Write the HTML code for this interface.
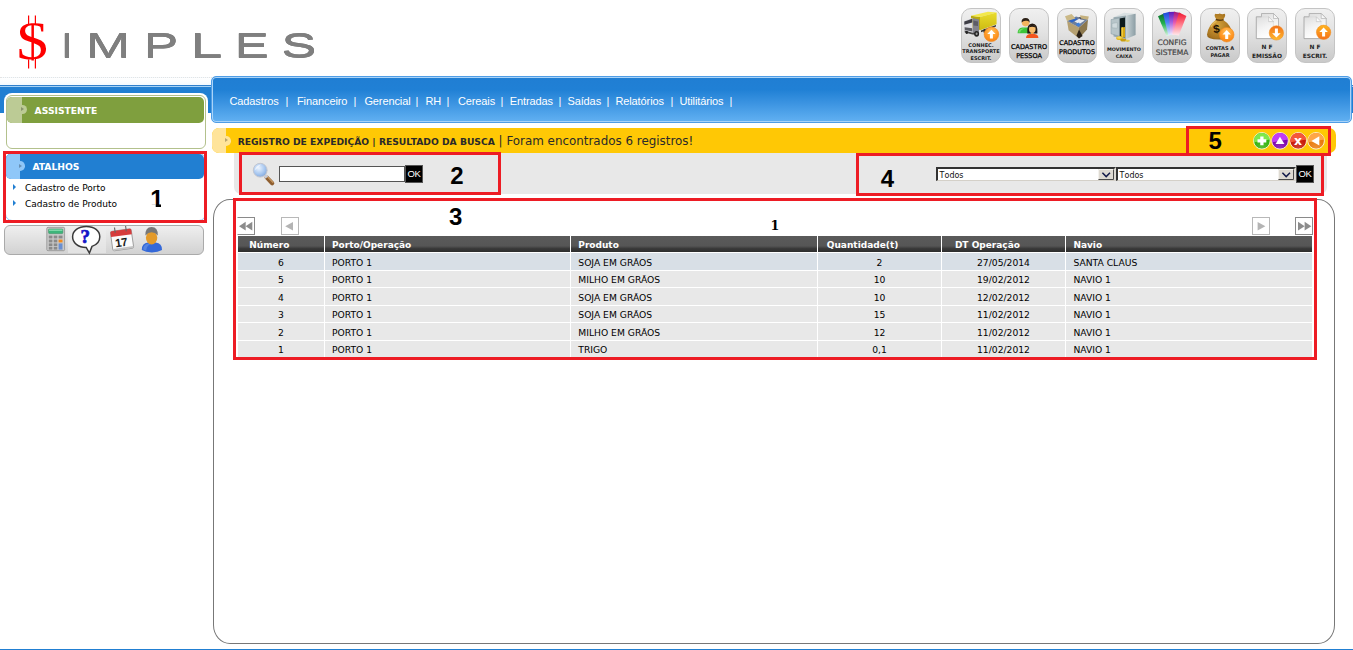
<!DOCTYPE html>
<html lang="pt-BR">
<head>
<meta charset="utf-8">
<title>Simples - Registro de Expedição</title>
<style>
html,body{margin:0;padding:0;}
body{width:1353px;height:650px;position:relative;overflow:hidden;background:#fff;
  font-family:"DejaVu Sans","Liberation Sans",sans-serif;font-size:10px;color:#000;}
.abs{position:absolute;}
/* logo */
#logo-s{left:16.7px;top:0;font-family:"Liberation Serif",serif;font-size:66px;color:#f00;line-height:1;height:66px;}
#logo-t{left:0;top:0;}

.tb{position:absolute;top:8px;width:40px;height:55px;box-sizing:border-box;border:1px solid #c4c4c4;border-radius:10px;background:linear-gradient(#f0f0f0 0%,#e2e2e2 45%,#c9c9c9 100%);overflow:hidden;}
.ti{position:absolute;left:0;top:0;width:40px;height:34px;}
.tl{position:absolute;left:-10px;width:58px;text-align:center;font-family:"DejaVu Sans",sans-serif;white-space:nowrap;letter-spacing:0}
.tl0{font-size:5.0px;font-weight:bold;line-height:6.7px;top:32.65px;color:#222;}
.tl1{font-size:6.5px;font-weight:normal;line-height:8.8px;top:34.00px;color:#000;-webkit-text-stroke:0.25px #000;}
.tl2{font-size:6.4px;font-weight:normal;line-height:8.8px;top:29.80px;color:#000;-webkit-text-stroke:0.25px #000;}
.tl3{font-size:4.85px;font-weight:bold;line-height:6.4px;top:37.30px;color:#222;}
.tl4{font-size:7.5px;font-weight:normal;line-height:10.1px;top:29.35px;color:#444;-webkit-text-stroke:0.2px #444;}
.tl5{font-size:5.05px;font-weight:bold;line-height:6.2px;top:36.40px;color:#222;}
.tl6{font-size:5.9px;font-weight:bold;line-height:8.6px;top:34.00px;color:#222;}
.tl7{font-size:5.9px;font-weight:bold;line-height:8.6px;top:34.00px;color:#222;}
/* blue bands */
#band-l{left:0;top:85px;width:1353px;height:27.5px;background:linear-gradient(#2f7fcc 0,#2f7fcc 1px,#a4d2f6 1px,#a4d2f6 2px,#217fd2 2px);}
#nav{left:211.4px;top:75.8px;width:1140.8px;height:46.8px;box-sizing:border-box;border:1px solid #4f9de6;box-shadow:inset 0 0 0 1px #a9d3f8;border-radius:5px;
  background:linear-gradient(#207ed3 0%,#2080d5 28%,#3d95e2 60%,#62b1f2 100%);}
#nav span{position:absolute;top:18.3px;left:17px;font-family:"Liberation Sans",sans-serif;font-size:11px;color:#fff;white-space:pre;letter-spacing:-0.1px}
/* assistente */
#assist{left:6px;top:95px;width:200px;height:54px;box-sizing:border-box;background:#fff;border:1px solid #b3c18c;border-radius:6px;box-shadow:0 0 0 2px #fff;}
#assist-h{left:7.4px;top:96.5px;width:196.8px;height:26px;background:#7f9f3e;border-radius:5px;overflow:hidden;}
#assist-h i{position:absolute;left:0;top:0;width:14.4px;height:100%;background:#bccb95;}
.hd-t{position:absolute;font-weight:bold;color:#fff;font-size:9.2px;font-family:"DejaVu Sans",sans-serif;}

.bl{position:absolute;width:9.6px;height:9.6px;border-radius:50%;}
.bl:after{content:"";position:absolute;left:4.2px;top:2.3px;border-left:3px solid rgba(0,0,0,.28);border-top:2.5px solid transparent;border-bottom:2.5px solid transparent;}
/* atalhos */
#atalhos-h{left:6.4px;top:153.8px;width:197.2px;height:25px;background:#217fd2;border-radius:5px;overflow:hidden;}
#atalhos-h i{position:absolute;left:0;top:0;width:13.6px;height:100%;background:#8fc7f8;}
.lnk{position:absolute;left:25px;font-size:9px;color:#000;white-space:nowrap;}
.bul{position:absolute;left:13px;width:0;height:0;border-left:3px solid #217fd2;border-top:3px solid transparent;border-bottom:3px solid transparent;}
#icons{left:4px;top:224.5px;width:200px;height:30px;box-sizing:border-box;border:1px solid #aaa;border-radius:6px;background:linear-gradient(#efefef,#d2d2d2);}
/* yellow bar */
#ybar{left:212.4px;top:128.2px;width:1123.2px;height:25.3px;background:#ffc805;border-radius:7px;overflow:hidden;}
#ybar i{position:absolute;left:0;top:0;width:13.6px;height:100%;background:#ffe49a;}
#ytxt{left:237.7px;top:134px;white-space:pre;font-size:9.2px;font-weight:bold;color:#2a2a2a;}
#ytxt b{font-weight:normal;font-size:11.9px;}
/* toolbar */
#tbar{left:234px;top:153px;width:1093px;height:41px;background:#e8e8e8;border-radius:0 0 7px 7px;}
.inp{position:absolute;background:#fff;box-sizing:border-box;border:1px solid #8a8a8a;border-top:2px solid #555;border-left:2px solid #555;}
.inp.sel{border-top:2px solid #333;border-left:2px solid #333;border-bottom:1px solid #d4d0c8;border-right:2px solid #dcd9d2;}
.ok{position:absolute;background:#000;color:#fff;font-family:"Liberation Sans",sans-serif;font-size:9.5px;letter-spacing:-0.3px;text-align:center;box-sizing:border-box;border:1px solid #555;}
/* main box */
#mbox{left:213.4px;top:199.2px;width:1121.6px;height:444.8px;box-sizing:border-box;border:1px solid #777;border-radius:17px / 19px;background:#fff;}
/* red annotation */
.red{position:absolute;box-sizing:border-box;border:3px solid #ed1c24;}
.num{position:absolute;font-family:"Liberation Sans",sans-serif;font-weight:bold;font-size:22px;color:#000;line-height:22px;}
/* table */
#th{left:238px;top:236px;width:1074px;height:16px;background:linear-gradient(#5a5a5a 0%,#565656 62%,#3a3a3a 78%,#2d2d2d 100%);}
.thc{position:absolute;top:0;height:16px;line-height:19.3px;color:#fff;font-weight:bold;font-size:9px;border-left:1px solid #fff;box-sizing:border-box;padding-left:7px;white-space:nowrap;}
.row{position:absolute;left:238px;width:1074px;height:16px;background:#e8e8e8;}
.row.sel{background:#d8dfe6;}
.c{position:absolute;top:0;padding-top:1px;height:100%;line-height:inherit;font-size:9.2px;white-space:nowrap;border-left:1px solid #fff;box-sizing:border-box;}
.pg{position:absolute;box-sizing:border-box;width:18px;height:18px;border:1px solid #999;background:#fff;}
.seltx{font-kerning:none;font-size:8px;line-height:11px;color:#111;font-family:"DejaVu Sans",sans-serif}
#bottom{left:0;top:648.5px;width:1353px;height:1.5px;background:#217fd2;}
</style>
</head>
<body>
<!-- logo -->
<svg id="logo-t" class="abs" width="340" height="75" viewBox="0 0 340 75" font-family="Liberation Sans, sans-serif" font-size="35.6" fill="#7f7f7f">
<clipPath id="cS"><rect x="0" y="23.2" width="60" height="37.2"/></clipPath>
<g clip-path="url(#cS)"><text transform="translate(16.8 59.35) scale(1.15 1)" font-family="Liberation Serif, serif" font-size="54.3" fill="#ff0000" stroke="none">$</text></g>
<path d="M28.6 15.4 V25 M35.4 15.4 V24.2 M28.6 59.6 V68.5 M35.4 58.8 V68.5" stroke="#ff0000" stroke-width="1.2" fill="none"/>
<g style="filter:drop-shadow(0 0.55px 0 #7f7f7f) drop-shadow(0 -0.55px 0 #7f7f7f)">
<text transform="translate(61.09 58.1) scale(1.195 1)">I</text>
<text transform="translate(86.04 58.1) scale(1.495 1)">M</text>
<text transform="translate(143.76 58.1) scale(1.452 1)">P</text>
<text transform="translate(190.26 58.1) scale(1.624 1)">L</text>
<text transform="translate(234.82 58.1) scale(1.430 1)">E</text>
<text transform="translate(281.60 58.1) scale(1.466 1)">S</text>
</g>
</svg>

<div class="tb" style="left:961px"><div class="ti" id="ti0"></div><div class="tl tl0">CONHEC.<br>TRANSPORTE<br>ESCRIT.</div></div>
<div class="tb" style="left:1009px"><div class="ti" id="ti1"></div><div class="tl tl1">CADASTRO<br>PESSOA</div></div>
<div class="tb" style="left:1057px"><div class="ti" id="ti2"></div><div class="tl tl2">CADASTRO<br>PRODUTOS</div></div>
<div class="tb" style="left:1104px"><div class="ti" id="ti3"></div><div class="tl tl3">MOVIMENTO<br>CAIXA</div></div>
<div class="tb" style="left:1152px"><div class="ti" id="ti4"></div><div class="tl tl4">CONFIG<br>SISTEMA</div></div>
<div class="tb" style="left:1200px"><div class="ti" id="ti5"></div><div class="tl tl5">CONTAS A<br>PAGAR</div></div>
<div class="tb" style="left:1247px"><div class="ti" id="ti6"></div><div class="tl tl6">N F<br>EMISSÃO</div></div>
<div class="tb" style="left:1295px"><div class="ti" id="ti7"></div><div class="tl tl7">N F<br>ESCRIT.</div></div>
<div class="abs" style="left:0;top:77px;width:212px;height:8px;border-top:1px dotted #e4e4e4;background:linear-gradient(#fff,#f1f8fe)"></div>
<div id="band-l" class="abs"></div>
<div id="nav" class="abs"><span style="left:17.0px">Cadastros</span><span style="left:73.0px">|</span><span style="left:84.6px">Financeiro</span><span style="left:141.0px">|</span><span style="left:152.0px">Gerencial</span><span style="left:203.0px">|</span><span style="left:213.0px">RH</span><span style="left:234.0px">|</span><span style="left:245.5px">Cereais</span><span style="left:288.0px">|</span><span style="left:297.4px">Entradas</span><span style="left:346.0px">|</span><span style="left:355.0px">Saídas</span><span style="left:394.0px">|</span><span style="left:403.0px">Relatórios</span><span style="left:458.0px">|</span><span style="left:467.0px">Utilitários</span><span style="left:517.0px">|</span></div>

<div id="assist" class="abs"></div>
<div id="assist-h" class="abs"><i></i><em class="bl" style="left:9.6px;top:8.2px;background:#bccb95"></em><span class="hd-t" style="left:27.2px;top:8px">ASSISTENTE</span></div>

<div class="abs" style="left:5px;top:153px;width:201px;height:68px;box-sizing:border-box;border:1px solid #8ec6f6;border-radius:7px"></div>
<div id="atalhos-h" class="abs"><i></i><em class="bl" style="left:8.8px;top:7.6px;background:#8fc7f8"></em><span class="hd-t" style="left:26px;top:7px">ATALHOS</span></div>
<div class="bul" style="top:184px"></div><div class="lnk" style="top:182.5px">Cadastro de Porto</div>
<div class="bul" style="top:200px"></div><div class="lnk" style="top:198.5px">Cadastro de Produto</div>
<div id="icons" class="abs"></div>

<div id="ybar" class="abs"><i></i><em class="bl" style="left:8.8px;top:8px;background:#ffe49a"></em></div>
<div id="ytxt" class="abs">REGISTRO DE EXPEDIÇÃO | RESULTADO DA BUSCA<b> | Foram encontrados 6 registros!</b></div>

<div id="tbar" class="abs"></div>
<div class="inp" style="left:279px;top:166px;width:126px;height:16px;border:1px solid #555"></div>
<div class="ok" style="left:405px;top:165px;width:18px;height:18px;line-height:16px">OK</div>
<div class="inp sel" style="left:936px;top:167px;width:180px;height:14px"></div>
<div class="inp sel" style="left:1116px;top:167px;width:180px;height:14px"></div>
<div class="ok" style="left:1296px;top:165px;width:18px;height:18px;line-height:16px">OK</div>

<div id="mbox" class="abs"></div>

<div class="pg" style="left:237px;top:217px;border-color:#8a8a8a;border-left-color:transparent"></div>
<div class="pg" style="left:281px;top:217px;border-color:#b8b8b8"></div>
<div class="pg" style="left:1252px;top:217px;border-color:#b8b8b8"></div>
<div class="pg" style="left:1295px;top:217px;border-color:#8a8a8a"></div>
<div class="abs seltx" style="left:939.6px;top:169.6px">Todos</div>
<div class="abs seltx" style="left:1119.6px;top:169.6px">Todos</div>
<div id="th" class="abs">
 <div class="thc" style="left:0px;width:86px;border-left:0;padding-left:11.3px">Número</div>
 <div class="thc" style="left:86px;width:246px;padding-left:7px">Porto/Operação</div>
 <div class="thc" style="left:332px;width:247px;padding-left:7.3px">Produto</div>
 <div class="thc" style="left:579px;width:124px;padding-left:8.8px">Quantidade(t)</div>
 <div class="thc" style="left:703px;width:124px;padding-left:12.9px">DT Operação</div>
 <div class="thc" style="left:827px;width:247px;padding-left:7.4px">Navio</div>
</div>
<div class="row sel" style="top:253px;height:17px;line-height:17px"><div class="c" style="left:0px;width:86px;border-left:0;text-align:center">6</div><div class="c" style="left:86px;width:246px;padding-left:7px">PORTO 1</div><div class="c" style="left:332px;width:247px;padding-left:7.3px">SOJA EM GRÃOS</div><div class="c" style="left:579px;width:124px;text-align:center">2</div><div class="c" style="left:703px;width:124px;text-align:center">27/05/2014</div><div class="c" style="left:827px;width:247px;padding-left:7.4px">SANTA CLAUS</div></div>
<div class="row" style="top:271px;height:16px;line-height:16px"><div class="c" style="left:0px;width:86px;border-left:0;text-align:center">5</div><div class="c" style="left:86px;width:246px;padding-left:7px">PORTO 1</div><div class="c" style="left:332px;width:247px;padding-left:7.3px">MILHO EM GRÃOS</div><div class="c" style="left:579px;width:124px;text-align:center">10</div><div class="c" style="left:703px;width:124px;text-align:center">19/02/2012</div><div class="c" style="left:827px;width:247px;padding-left:7.4px">NAVIO 1</div></div>
<div class="row" style="top:288px;height:17px;line-height:17px"><div class="c" style="left:0px;width:86px;border-left:0;text-align:center">4</div><div class="c" style="left:86px;width:246px;padding-left:7px">PORTO 1</div><div class="c" style="left:332px;width:247px;padding-left:7.3px">SOJA EM GRÃOS</div><div class="c" style="left:579px;width:124px;text-align:center">10</div><div class="c" style="left:703px;width:124px;text-align:center">12/02/2012</div><div class="c" style="left:827px;width:247px;padding-left:7.4px">NAVIO 1</div></div>
<div class="row" style="top:306px;height:16px;line-height:16px"><div class="c" style="left:0px;width:86px;border-left:0;text-align:center">3</div><div class="c" style="left:86px;width:246px;padding-left:7px">PORTO 1</div><div class="c" style="left:332px;width:247px;padding-left:7.3px">SOJA EM GRÃOS</div><div class="c" style="left:579px;width:124px;text-align:center">15</div><div class="c" style="left:703px;width:124px;text-align:center">11/02/2012</div><div class="c" style="left:827px;width:247px;padding-left:7.4px">NAVIO 1</div></div>
<div class="row" style="top:323px;height:17px;line-height:17px"><div class="c" style="left:0px;width:86px;border-left:0;text-align:center">2</div><div class="c" style="left:86px;width:246px;padding-left:7px">PORTO 1</div><div class="c" style="left:332px;width:247px;padding-left:7.3px">MILHO EM GRÃOS</div><div class="c" style="left:579px;width:124px;text-align:center">12</div><div class="c" style="left:703px;width:124px;text-align:center">11/02/2012</div><div class="c" style="left:827px;width:247px;padding-left:7.4px">NAVIO 1</div></div>
<div class="row" style="top:341px;height:16px;line-height:16px"><div class="c" style="left:0px;width:86px;border-left:0;text-align:center">1</div><div class="c" style="left:86px;width:246px;padding-left:7px">PORTO 1</div><div class="c" style="left:332px;width:247px;padding-left:7.3px">TRIGO</div><div class="c" style="left:579px;width:124px;text-align:center">0,1</div><div class="c" style="left:703px;width:124px;text-align:center">11/02/2012</div><div class="c" style="left:827px;width:247px;padding-left:7.4px">NAVIO 1</div></div>


<div class="red" style="left:3px;top:151px;width:204px;height:72px"></div>
<div class="red" style="left:239px;top:152px;width:262px;height:43px"></div>
<div class="red" style="left:233px;top:198px;width:1084px;height:162px"></div>
<div class="red" style="left:856px;top:153px;width:468px;height:43px"></div>
<div class="red" style="left:1186px;top:126px;width:145px;height:30px"></div>
<svg class="abs" style="left:0;top:0;pointer-events:none" width="1353" height="650" viewBox="0 0 1353 650">
<defs>
<radialGradient id="gOr" cx="0.5" cy="0.3" r="0.8"><stop offset="0" stop-color="#ffc15a"/><stop offset="0.6" stop-color="#ff9421"/><stop offset="1" stop-color="#f07a10"/></radialGradient>
<linearGradient id="gDoc" x1="0" y1="0" x2="0.3" y2="1"><stop offset="0" stop-color="#dedede"/><stop offset="0.6" stop-color="#f4f4f4"/><stop offset="1" stop-color="#fdfdfd"/></linearGradient>
<linearGradient id="gSafe" x1="0" y1="0" x2="1" y2="0"><stop offset="0" stop-color="#c9d3d8"/><stop offset="0.5" stop-color="#8fa1aa"/><stop offset="1" stop-color="#6d7f88"/></linearGradient>
<radialGradient id="gBag" cx="0.4" cy="0.45" r="0.7"><stop offset="0" stop-color="#d7a43b"/><stop offset="0.7" stop-color="#a8741f"/><stop offset="1" stop-color="#6e4a12"/></radialGradient>
<radialGradient id="gGreen" cx="0.45" cy="0.3" r="0.75"><stop offset="0" stop-color="#b6f57a"/><stop offset="0.55" stop-color="#4fc321"/><stop offset="1" stop-color="#2c9a0a"/></radialGradient>
<radialGradient id="gPurple" cx="0.45" cy="0.3" r="0.75"><stop offset="0" stop-color="#cf7af5"/><stop offset="0.55" stop-color="#9a1ed6"/><stop offset="1" stop-color="#6a0aa6"/></radialGradient>
<radialGradient id="gRed" cx="0.45" cy="0.3" r="0.75"><stop offset="0" stop-color="#ff8a6a"/><stop offset="0.55" stop-color="#e8301a"/><stop offset="1" stop-color="#b5160a"/></radialGradient>
<radialGradient id="gOr2" cx="0.45" cy="0.3" r="0.75"><stop offset="0" stop-color="#ffc27a"/><stop offset="0.55" stop-color="#f5932a"/><stop offset="1" stop-color="#e0720a"/></radialGradient>
<radialGradient id="gLens" cx="0.4" cy="0.35" r="0.7"><stop offset="0" stop-color="#eaf3ff"/><stop offset="0.6" stop-color="#a9c8f0"/><stop offset="1" stop-color="#7fa6dc"/></radialGradient>
<radialGradient id="gGloss" cx="0.5" cy="1" r="0.6"><stop offset="0" stop-color="#fff" stop-opacity="0.18"/><stop offset="1" stop-color="#fff" stop-opacity="0"/></radialGradient>
<linearGradient id="gTruck" x1="0" y1="0" x2="0" y2="1"><stop offset="0" stop-color="#e9dc2c"/><stop offset="1" stop-color="#cdbb12"/></linearGradient>
<linearGradient id="gSafe2" x1="0" y1="0" x2="1" y2="0"><stop offset="0" stop-color="#c9d4d7"/><stop offset="1" stop-color="#8b9da4"/></linearGradient>
<linearGradient id="gF1" x1="0" y1="0" x2="0" y2="1"><stop offset="0" stop-color="#0a6a2a"/><stop offset="0.45" stop-color="#22b24e"/><stop offset="1" stop-color="#dff7e6"/></linearGradient>
<linearGradient id="gF2" x1="0" y1="0" x2="0" y2="1"><stop offset="0" stop-color="#1b45d8"/><stop offset="0.45" stop-color="#4f86f2"/><stop offset="1" stop-color="#e3edff"/></linearGradient>
<linearGradient id="gF3" x1="0" y1="0" x2="0" y2="1"><stop offset="0" stop-color="#5a18b8"/><stop offset="0.45" stop-color="#a060e0"/><stop offset="1" stop-color="#f1e6fb"/></linearGradient>
<linearGradient id="gF4" x1="0" y1="0" x2="0" y2="1"><stop offset="0" stop-color="#a0187a"/><stop offset="0.45" stop-color="#e356b0"/><stop offset="1" stop-color="#fde6f4"/></linearGradient>
<linearGradient id="gF5" x1="0" y1="0" x2="0" y2="1"><stop offset="0" stop-color="#f01830"/><stop offset="0.45" stop-color="#ff6f80"/><stop offset="1" stop-color="#ffe9ec"/></linearGradient>
<linearGradient id="gOrD" x1="0" y1="0" x2="0" y2="1"><stop offset="0" stop-color="#f2701a"/><stop offset="1" stop-color="#ffba2c"/></linearGradient>
<linearGradient id="gOrU" x1="0" y1="0" x2="0" y2="1"><stop offset="0" stop-color="#ffb51e"/><stop offset="1" stop-color="#f4701c"/></linearGradient>
</defs>
<!-- truck -->
<g>
<path d="M971 15.7 L980 17 L980 30 L971 27.5 Z" fill="#b9a90e"/>
<path d="M971 15.7 L988 11.8 L996.6 12.6 L980 17 Z" fill="#f3e84a"/>
<path d="M980 17 L996.6 12.6 L996.6 24.2 L980 30.2 Z" fill="url(#gTruck)"/>
<path d="M981 30.6 L996 25 L996 26.6 L981 32.2 Z" fill="#3a3a3a"/>
<ellipse cx="985" cy="31" rx="1.7" ry="2.2" fill="#2a2a2a"/>
<path d="M972.5 18 L979 19.6 L979 33.6 L972.5 33.2 Z" fill="#84848c"/>
<path d="M964 21 L972.5 18 L972.5 33.2 L964.6 31 Z" fill="#dcdce2"/>
<path d="M964.3 21.4 L972.3 18.7 L972.3 22.6 L964.3 24.8 Z" fill="#3c3c44"/>
<path d="M964.6 27.2 L972.3 28.2 L972.3 31.6 L964.8 30 Z" fill="#5a5a60"/>
<path d="M973.4 20.4 L978 21.6 L978 26 L973.4 25.4 Z" fill="#5d5d66"/>
<path d="M964.6 30.6 L972.5 32.8 L979 33.4 L979 34.8 L972.5 34.6 L964.8 32.4 Z" fill="#444"/>
<ellipse cx="976.6" cy="33.8" rx="2.5" ry="2.9" fill="#242424"/>
<ellipse cx="976.6" cy="33.8" rx="1" ry="1.2" fill="#9a9a9a"/>
<ellipse cx="966.8" cy="32.4" rx="1.2" ry="1.7" fill="#242424"/>
</g>
<circle cx="991.4" cy="34.3" r="7.3" fill="url(#gOr)" stroke="#f08a1c" stroke-width="0.6"/><path d="M991.4 29.699999999999996 L995.6 34.099999999999994 L992.9 34.099999999999994 L992.9 38.5 L989.9 38.5 L989.9 34.099999999999994 L987.1999999999999 34.099999999999994 Z" fill="#fff"/>
<!-- persons -->
<g>
<path d="M1017.6 33.3 Q1017.6 28.2 1022.4 27.6 L1028 27.6 Q1031 28 1031 33.3 Z" fill="#3cc43a"/>
<path d="M1018.4 32.6 Q1018.6 29 1022.6 28.4 L1025 28.4 Q1020.5 29.4 1020.2 32.6 Z" fill="#8be67a" opacity="0.7"/>
<circle cx="1025.6" cy="22.6" r="3.8" fill="#f4b45e"/>
<path d="M1021.6 22.6 Q1021.2 18 1025.6 18 Q1030 18 1029.6 22.8 Q1028.6 20.4 1026.4 20.8 Q1023.4 20.4 1021.6 22.6Z" fill="#2c2118"/>
<path d="M1027.3 33.6 Q1026.4 23.4 1032.3 23.4 Q1038.2 23.4 1037.4 33.6 Z" fill="#241a14"/>
<ellipse cx="1032.3" cy="29" rx="3.3" ry="4" fill="#f8be6e"/>
<path d="M1029 27.2 Q1030 24.6 1032.3 24.8 Q1034.8 24.6 1035.6 27.4 Q1032.4 26 1029 27.2Z" fill="#241a14"/>
<rect x="1031" y="32" width="2.6" height="2.6" fill="#f0a850"/>
<path d="M1026 38 Q1026 34.4 1030 34 L1034.6 34 Q1038.4 34.4 1038.4 38 Z" fill="#f4541c"/>
</g>
<!-- box -->
<g>
<path d="M1067 21 L1079 27.5 L1079 38.4 L1068.6 30.2 Z" fill="#b5a071"/>
<path d="M1079 27.5 L1088 19.6 L1087 29.6 L1079 38.4 Z" fill="#8c784e"/>
<path d="M1067 21 L1076 16.4 L1088 19.6 L1079 27.5 Z" fill="#6f7f9a"/>
<path d="M1068.6 20.6 L1074.6 17.6 L1078 19 L1072 22.6 Z" fill="#2f66c8"/>
<path d="M1074.5 21.4 L1079.5 18.6 L1084.6 20.4 L1079.4 24 Z" fill="#e8ecf2"/>
<path d="M1078.6 17.6 L1082 16.8 L1084 19 L1080.6 19.6 Z" fill="#39405a"/>
<path d="M1075.6 24 L1079 22.6 L1080.6 25 L1078 26.4 Z" fill="#3f7fd8"/>
<path d="M1065 16.2 L1071.6 14 L1075.6 18.4 L1067 21 Z" fill="#cbb987"/>
<path d="M1080 15.2 L1088.8 16.4 L1088 19.8 L1080.8 18.4 Z" fill="#c4b07d"/>
<path d="M1079 29.4 L1082.6 36 L1079 38.6 L1076.4 35.8 Z" fill="#2a2117"/>
</g>
<!-- safe -->
<g>
<path d="M1113.5 17.2 L1124 12.8 L1135.6 13.8 L1126 15.4 Z" fill="#d8e0e2"/>
<path d="M1126 15.4 L1135.6 13.8 L1135.6 35 L1126 39 Z" fill="url(#gSafe2)"/>
<path d="M1113.5 17.2 L1126 15.4 L1126 39 L1113.5 36.4 Z" fill="#9aabb1"/>
<path d="M1119.4 18.4 L1125 17.4 L1125 37.4 L1119.4 36.2 Z" fill="#0d1b1d"/>
<path d="M1111 19.6 L1119.4 18 L1119.4 36.2 L1111 33.8 Z" fill="#b7c5c9" stroke="#8798a0" stroke-width="0.5"/>
<path d="M1112 23.4 L1117.4 22.6 L1117.4 28.2 L1112 27.8 Z" fill="#cfdadd" stroke="#93a3aa" stroke-width="0.4"/>
<path d="M1121.4 27.4 L1125 27 L1125 37.4 L1121.4 36.6 Z" fill="#d6a614"/>
<path d="M1121.4 27.4 L1123 27.2 L1123 37 L1121.4 36.6 Z" fill="#f0cb3a"/>
<ellipse cx="1119.6" cy="38.2" rx="3.4" ry="1.9" fill="#e5ba20"/>
<ellipse cx="1119.4" cy="37.7" rx="2.4" ry="1.1" fill="#f3d75a"/>
<ellipse cx="1123.4" cy="40" rx="3" ry="1.5" fill="#c99d10"/>
<ellipse cx="1127.6" cy="40.8" rx="2.3" ry="1.1" fill="#e6c94c"/>
</g>
<!-- color fan -->
<g>
<path d="M1158 16.2 L1164.5 13.2 L1172.4 34.2 L1166.6 36.2 Z" fill="url(#gF1)"/>
<path d="M1163 13.6 L1169.8 11.8 L1174.4 34 L1168.4 35.4 Z" fill="url(#gF2)"/>
<path d="M1168.8 11.9 L1175.2 11.7 L1176 34.2 L1170.4 34.6 Z" fill="url(#gF3)"/>
<path d="M1174 11.8 L1180.6 13 L1177.6 34.8 L1172 34.4 Z" fill="url(#gF4)"/>
<path d="M1179 12.6 L1186.4 16 L1178.8 35.4 L1172.6 34.4 Z" fill="url(#gF5)"/>
</g>
<!-- money bag -->
<g>
<path d="M1216.4 19.6 Q1213.4 15.2 1215.4 13.8 Q1218 14.6 1219.6 13.4 Q1222 14.8 1224.6 13.8 Q1226.4 15.4 1223 19.8 Q1231 25 1232 33 Q1232.4 39.6 1220 39.6 Q1206.6 39.8 1207 34.6 Q1208 25.6 1216.4 19.6 Z" fill="url(#gBag)"/>
<path d="M1215.8 19.4 Q1219.6 21 1223.6 19.6" stroke="#5a3a0c" stroke-width="1.3" fill="none"/>
<path d="M1211 27 Q1213 22.6 1216.6 21.4" stroke="#ecc866" stroke-width="1.2" fill="none" opacity="0.7"/>
<text x="1213" y="32.8" font-family="Liberation Sans, sans-serif" font-weight="bold" font-size="11.5" fill="#1f1404" transform="rotate(-8 1217 28)">$</text>
</g>
<circle cx="1226.7" cy="34.7" r="7.3" fill="url(#gOr)" stroke="#f08a1c" stroke-width="0.6"/><path d="M1226.7 30.1 L1230.9 34.5 L1228.2 34.5 L1228.2 38.900000000000006 L1225.2 38.900000000000006 L1225.2 34.5 L1222.5 34.5 Z" fill="#fff"/>
<!-- doc down -->
<g>
<path d="M1261.5 13.5 H1273.5 L1278.5 18.5 V36 H1261.5 Z" fill="url(#gDoc)" stroke="#a9a9a9" stroke-width="0.8"/>
<path d="M1273.5 13.5 V18.5 H1278.5 Z" fill="#f6f6f6" stroke="#a9a9a9" stroke-width="0.6"/>
<path d="M1256.3 16.8 H1268.6 L1273.4 21.6 V38.6 H1256.3 Z" fill="url(#gDoc)" stroke="#d4d4d4" stroke-width="0.5"/><path d="M1261.5 16.8 H1256.3 V38.6 H1273.4" fill="none" stroke="#a3a3a3" stroke-width="0.8"/>
<path d="M1268.6 16.8 V21.6 H1273.4 Z" fill="#fafafa" stroke="#b5b5b5" stroke-width="0.5"/>
</g>
<circle cx="1276.4" cy="32.9" r="7.2" fill="url(#gOrD)" stroke="#f08a1c" stroke-width="0.5"/><path d="M1276.4 37.6 L1280.7 33.2 L1277.9 33.2 L1277.9 28.6 L1274.9 28.6 L1274.9 33.2 L1272.1 33.2 Z" fill="#fff"/>
<!-- doc up -->
<g>
<path d="M1309.2 13.5 H1321.2 L1326.2 18.5 V36 H1309.2 Z" fill="url(#gDoc)" stroke="#a9a9a9" stroke-width="0.8"/>
<path d="M1321.2 13.5 V18.5 H1326.2 Z" fill="#f6f6f6" stroke="#a9a9a9" stroke-width="0.6"/>
<path d="M1304.0 16.8 H1316.3 L1321.1 21.6 V38.6 H1304.0 Z" fill="url(#gDoc)" stroke="#d4d4d4" stroke-width="0.5"/><path d="M1309.2 16.8 H1304.0 V38.6 H1321.1" fill="none" stroke="#a3a3a3" stroke-width="0.8"/>
<path d="M1316.3 16.8 V21.6 H1321.1 Z" fill="#fafafa" stroke="#b5b5b5" stroke-width="0.5"/>
</g>
<circle cx="1323.6" cy="32.3" r="7.2" fill="url(#gOrU)" stroke="#f08a1c" stroke-width="0.5"/><path d="M1323.6 27.6 L1327.9 32.0 L1325.1 32.0 L1325.1 36.6 L1322.1 36.6 L1322.1 32.0 L1319.3 32.0 Z" fill="#fff"/>

<text x="770.4" y="230.1" font-family="DejaVu Serif, Liberation Serif, serif" font-weight="bold" font-size="12.7" fill="#000">1</text>
<clipPath id="c1"><path d="M149 188 H161 V207.2 H155.7 V204.3 H149 Z"/></clipPath>
<g font-family="Liberation Sans, sans-serif" font-weight="bold" font-size="24" fill="#000">
<text x="150.2" y="206.8" clip-path="url(#c1)">1</text><text x="450.3" y="184">2</text><text x="448.9" y="224.8">3</text><text x="880.8" y="186.7">4</text><text x="1208.4" y="148.6">5</text>
</g>
<!-- round buttons -->
<circle cx="1261.9" cy="140.8" r="8.3" fill="#35b30e" stroke="#fff8e0" stroke-width="0.9"/><path d="M1254.0 142.3 A7.9 7.9 0 0 1 1269.8000000000002 139.60000000000002 Q1261.9 141.3 1254.0 142.3Z" fill="#7ee84c"/><circle cx="1261.9" cy="140.8" r="7.9" fill="url(#gGloss)"/>
<circle cx="1280" cy="140.8" r="8.3" fill="#7d06ad" stroke="#fff8e0" stroke-width="0.9"/><path d="M1272.1 142.3 A7.9 7.9 0 0 1 1287.9 139.60000000000002 Q1280 141.3 1272.1 142.3Z" fill="#c13cf5"/><circle cx="1280" cy="140.8" r="7.9" fill="url(#gGloss)"/>
<circle cx="1298.2" cy="140.8" r="8.3" fill="#c81a08" stroke="#fff8e0" stroke-width="0.9"/><path d="M1290.3 142.3 A7.9 7.9 0 0 1 1306.1000000000001 139.60000000000002 Q1298.2 141.3 1290.3 142.3Z" fill="#f5573a"/><circle cx="1298.2" cy="140.8" r="7.9" fill="url(#gGloss)"/>
<circle cx="1316.1" cy="140.8" r="8.3" fill="#ea7a0c" stroke="#fff8e0" stroke-width="0.9"/><path d="M1308.1999999999998 142.3 A7.9 7.9 0 0 1 1324.0 139.60000000000002 Q1316.1 141.3 1308.1999999999998 142.3Z" fill="#ffa647"/><circle cx="1316.1" cy="140.8" r="7.9" fill="url(#gGloss)"/>
<path d="M1260.25 136.4 h3.3 v2.75 h2.75 v3.3 h-2.75 v2.75 h-3.3 v-2.75 h-2.75 v-3.3 h2.75 Z" fill="#fff"/>
<path d="M1279.95 136.7 L1284.4 143.9 L1275.6 143.9 Z" fill="#fff"/>
<text x="1293.9" y="145" font-family="DejaVu Sans, sans-serif" font-weight="bold" font-size="12.4" fill="#fff">x</text>
<path d="M1311.4 141 L1319.3 136.2 L1319.3 145.4 Z" fill="#fff"/>
<!-- magnifier -->
<g>
<line x1="266.6" y1="177.4" x2="272.2" y2="183.2" stroke="#8f5f30" stroke-width="4.2" stroke-linecap="round"/>
<line x1="267.6" y1="176.9" x2="272.9" y2="182.4" stroke="#c99a63" stroke-width="1.3" stroke-linecap="round"/>
<line x1="265.2" y1="175.6" x2="266.9" y2="177.4" stroke="#c9ccd6" stroke-width="3.6"/>
<circle cx="260.2" cy="170.2" r="6.9" fill="url(#gLens)" stroke="#c3c6d0" stroke-width="1"/>
<path d="M254.6 170.6 Q255.6 165.2 261 164.4 Q258.6 167.6 254.6 170.6Z" fill="#fff" opacity="0.55"/>
</g>
<!-- select arrows -->
<g>
<rect x="1098" y="169" width="16" height="11" fill="#dedad2"/>
<path d="M1098.5 179.5 H1113.5 V169.5" stroke="#4a4a4a" stroke-width="1" fill="none"/>
<path d="M1098.5 179 V169.5 H1113" stroke="#f4f2ee" stroke-width="1" fill="none"/>
<path d="M1102.4 172.8 L1106.2 176.6 L1110 172.8" stroke="#141c4a" stroke-width="1.5" fill="none"/>
<rect x="1278" y="169" width="16" height="11" fill="#dedad2"/>
<path d="M1278.5 179.5 H1293.5 V169.5" stroke="#4a4a4a" stroke-width="1" fill="none"/>
<path d="M1278.5 179 V169.5 H1293" stroke="#f4f2ee" stroke-width="1" fill="none"/>
<path d="M1282.4 172.8 L1286.2 176.6 L1290 172.8" stroke="#141c4a" stroke-width="1.5" fill="none"/>
</g>
<!-- pagination arrows -->
<g fill="#8c8c8c">
<path d="M245.7 221.8 L245.7 230.6 L239 226.2 Z"/><path d="M252.3 221.8 L252.3 230.6 L245.6 226.2 Z"/>
<path d="M1298 221.8 L1298 230.6 L1304.7 226.2 Z"/><path d="M1304.6 221.8 L1304.6 230.6 L1311.3 226.2 Z"/>
</g>
<g fill="#b4b4b4">
<path d="M293 222 L293 230.4 L285.2 226.2 Z"/>
<path d="M1257.6 222 L1257.6 230.4 L1265.4 226.2 Z"/>
</g>
<!-- calculator -->
<g>
<rect x="46.8" y="227.3" width="17.8" height="23.4" rx="1.2" fill="#c9c9c9" stroke="#8f8f8f" stroke-width="0.8"/>
<rect x="48.6" y="229" width="14.2" height="4.6" rx="0.8" fill="#3db57a" stroke="#2a8a58" stroke-width="0.5"/>
<rect x="49" y="229.4" width="13.4" height="1.6" fill="#8fe0b4" opacity="0.8"/>
<g fill="#8a8a8a">
<rect x="48.8" y="235.6" width="3.6" height="2.8"/><rect x="53.7" y="235.6" width="3.6" height="2.8"/><rect x="58.6" y="235.6" width="3.9" height="2.8"/>
<rect x="48.8" y="239.6" width="3.6" height="2.8"/><rect x="53.7" y="239.6" width="3.6" height="2.8"/>
<rect x="48.8" y="243.4" width="3.6" height="2.8"/><rect x="53.7" y="243.4" width="3.6" height="2.8"/>
<rect x="48.8" y="247" width="3.6" height="2.6"/><rect x="53.7" y="247" width="3.6" height="2.6"/>
</g>
<rect x="58.6" y="239.6" width="3.9" height="2.8" fill="#f28a1c"/>
<rect x="58.6" y="243.4" width="3.9" height="6.2" fill="#6a8fd0"/>
</g>
<!-- help bubble -->
<g>
<rect x="68" y="226" width="38" height="27" fill="#efefef" opacity="0.55"/>
<path d="M86.3 226.4 C94.4 226.4 99.8 230.8 99.8 236.8 C99.8 241.4 96.8 244.8 92 246.4 L89.4 253 L86.2 247.4 C78 247.4 72.6 242.8 72.6 236.8 C72.6 230.8 78.2 226.4 86.3 226.4 Z" fill="#fff" stroke="#3a3a3a" stroke-width="1.5"/>
<text x="80.6" y="243.3" font-family="Liberation Serif, serif" font-weight="bold" font-size="19" fill="#1414c8" stroke="#1414c8" stroke-width="0.7">?</text>
</g>
<!-- calendar -->
<g transform="rotate(-8 122 239)">
<rect x="111.4" y="230" width="21" height="19.6" rx="1.5" fill="#fbfbfb" stroke="#8f8f8f" stroke-width="0.8"/>
<path d="M111.4 231.4 Q111.4 230 112.8 230 L131 230 Q132.4 230 132.4 231.4 L132.4 235.6 L111.4 235.6 Z" fill="#d63c3c"/>
<rect x="111.8" y="247.6" width="20.2" height="1.8" fill="#c4c4c4"/>
<text x="114.6" y="246.4" font-family="Liberation Sans, sans-serif" font-weight="bold" font-size="11.5" fill="#1a1a1a" letter-spacing="-0.4">17</text>
<rect x="115.6" y="226.6" width="1.1" height="5.4" fill="#666"/><rect x="126.8" y="226.6" width="1.1" height="5.4" fill="#666"/>
</g>
<!-- user -->
<g>
<path d="M141.8 250 Q141.6 243.4 148 242.6 L155.6 242.6 Q162.2 243.4 162 250 Q158 252.4 151.9 252.4 Q145.6 252.4 141.8 250 Z" fill="#3468d8"/>
<path d="M143.2 249.6 Q143.2 244.6 148.4 243.6 L152 243.6 Q146.5 245.2 146.2 250.6 Z" fill="#6d97ea" opacity="0.6"/>
<ellipse cx="151.6" cy="237.8" rx="5.7" ry="6.6" fill="#e39a2a"/>
<path d="M145.4 235.6 Q145 227 151.6 227 Q158.2 227 157.8 235.6 Q155 232.2 151.6 232.2 Q148.2 232.2 145.4 235.6 Z" fill="#777"/>
</g>
</svg>
<div id="bottom" class="abs"></div>
</body>
</html>
